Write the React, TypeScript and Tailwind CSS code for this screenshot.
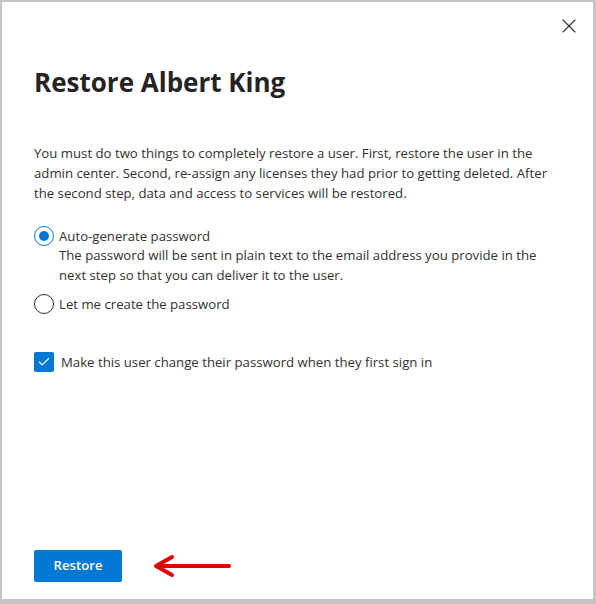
import { Check, X } from 'lucide-react';

const font = { fontFamily: '"Segoe UI", "Open Sans", "Liberation Sans", sans-serif' };

function Radio({ checked }: { checked: boolean }) {
    return (
        <span
            className={`flex h-[20px] w-[20px] shrink-0 items-center justify-center rounded-full border ${
                checked ? 'border-[#0078d4]' : 'border-[#323130]'
            }`}
        >
            {checked && <span className="h-[10px] w-[10px] rounded-full bg-[#0078d4]" />}
        </span>
    );
}

export default function App() {
    return (
        <div className="h-[604px] w-[596px] bg-[#c4c4c4] pb-[5px] pl-[2px] pr-[3px] pt-[2px]" style={font}>
            <div className="flex h-full flex-col bg-white text-[#323130]">
                {/* close */}
                <div className="flex justify-end pr-[12px] pt-[12px]">
                    <X className="h-[24px] w-[24px] text-[#323130]" strokeWidth={1.1} />
                </div>

                <div className="flex flex-1 flex-col px-[32px]">
                    <h1 className="mt-[27px] text-[26px] font-bold leading-[34px] text-[#252423]">
                        Restore Albert King
                    </h1>

                    <p className="mt-[44px] whitespace-nowrap text-[13.2px] leading-[20px]">
                        You must do two things to completely restore a user. First, restore the user in the
                        <br />
                        admin center. Second, re-assign any licenses they had prior to getting deleted. After
                        <br />
                        the second step, data and access to services will be restored.
                    </p>

                    <div className="mt-[23px] flex items-start gap-[5px]">
                        <Radio checked />
                        <div className="whitespace-nowrap text-[13.2px] leading-[20px]">
                            <div>Auto-generate password</div>
                            <div className="leading-[19.5px]">
                                The password will be sent in plain text to the email address you provide in the
                                <br />
                                next step so that you can deliver it to the user.
                            </div>
                        </div>
                    </div>

                    <div className="mt-[9px] flex items-center gap-[5px]">
                        <Radio checked={false} />
                        <span className="text-[13.2px] leading-[20px]">Let me create the password</span>
                    </div>

                    <div className="mt-[38px] flex items-center gap-[7px]">
                        <span className="flex h-[20px] w-[20px] items-center justify-center rounded-[2px] bg-[#0078d4]">
                            <Check className="h-[14px] w-[14px] text-white" strokeWidth={2} />
                        </span>
                        <span className="text-[13.2px] leading-[20px]">
                            Make this user change their password when they first sign in
                        </span>
                    </div>

                    <div className="mt-auto mb-[17px] flex items-center">
                        <button className="h-[32px] w-[88px] rounded-[2px] bg-[#0078d4] text-[13.2px] font-semibold text-white">
                            Restore
                        </button>
                        <svg width="82" height="24" viewBox="0 0 82 24" className="ml-[30px]">
                            <path d="M6 12 H77" stroke="#e30000" strokeWidth="4" strokeLinecap="round" />
                            <path
                                d="M20 3 L4 12 L20 21"
                                fill="none"
                                stroke="#e30000"
                                strokeWidth="4"
                                strokeLinecap="round"
                                strokeLinejoin="round"
                            />
                        </svg>
                    </div>
                </div>
            </div>
        </div>
    );
}
